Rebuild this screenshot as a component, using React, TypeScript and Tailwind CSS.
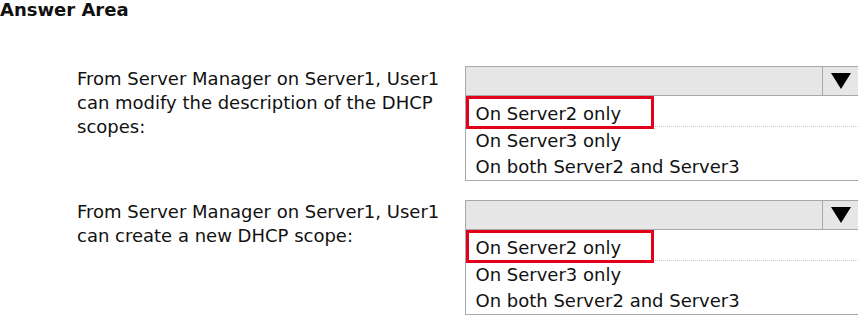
import React from "react";

const font = { fontFamily: '"DejaVu Sans", Verdana, sans-serif' };

function Dropdown({ options }: { options: string[] }) {
  return (
    <div className="w-[394px] text-[18px] text-[#111]">
      <div className="flex h-[30px] border border-r-0 border-[#a8a8a8] bg-[#e6e6e6]">
        <div className="flex-1" />
        <div className="flex w-[36px] items-center justify-center border-l border-[#a8a8a8]">
          <svg width="20" height="16" viewBox="0 0 20 16">
            <polygon points="0,0 20,0 10,16" fill="#000" />
          </svg>
        </div>
      </div>
      <div className="relative border-b border-l border-[#a8a8a8] pt-[5px] pb-[1px]">
        <div className="flex h-[26px] items-center border-b border-dotted border-[#c8c8c8] pl-[10px]">
          {options[0]}
        </div>
        {options.slice(1).map((o) => (
          <div key={o} className="flex h-[26px] items-center pl-[10px]">
            {o}
          </div>
        ))}
        <div className="absolute left-0 top-0 h-[33px] w-[188px] border-[3px] border-[#e3001b]" />
      </div>
    </div>
  );
}

export default function App() {
  const opts = ["On Server2 only", "On Server3 only", "On both Server2 and Server3"];
  return (
    <div className="h-[321px] w-[858px] overflow-hidden bg-white text-[#111]" style={font}>
      <div className="text-[18px] font-bold leading-[20px] text-[#111]">Answer Area</div>
      <div className="mt-[46px] flex">
        <div className="w-[465px] pl-[77px] text-[18px] leading-[24px]">
          <div className="pt-[1px]">
            From Server Manager on Server1, User1
            <br />
            can modify the description of the DHCP
            <br />
            scopes:
          </div>
        </div>
        <Dropdown options={opts} />
      </div>
      <div className="mt-[19px] flex">
        <div className="w-[465px] pl-[77px] text-[18px] leading-[24px]">
          <div>
            From Server Manager on Server1, User1
            <br />
            can create a new DHCP scope:
          </div>
        </div>
        <Dropdown options={opts} />
      </div>
    </div>
  );
}
